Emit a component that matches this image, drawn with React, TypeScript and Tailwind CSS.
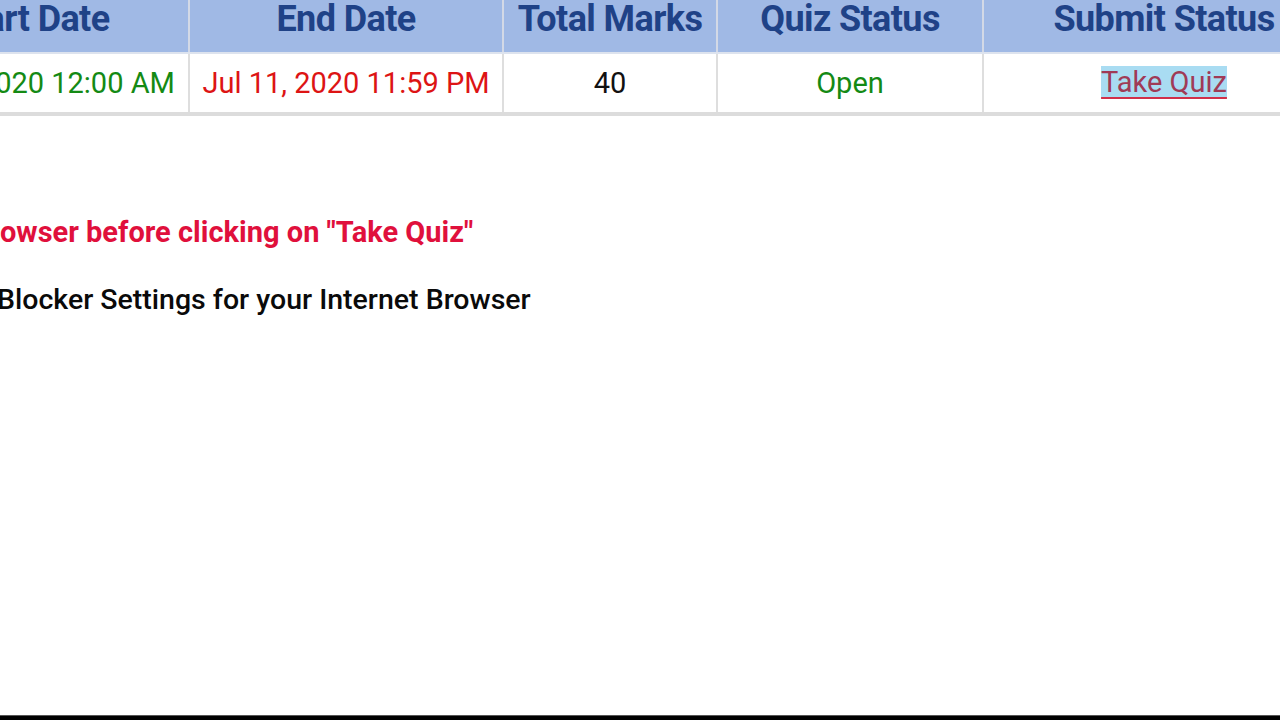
import React from "react";

// Quiz listing page, viewed zoomed-in (left and right edges cropped).

const COLS = [
    { key: "start", label: "Start Date", w: "w-[314px]" },
    { key: "end", label: "End Date", w: "w-[314px]" },
    { key: "marks", label: "Total Marks", w: "w-[214px]" },
    { key: "status", label: "Quiz Status", w: "w-[266px]" },
    { key: "submit", label: "Submit Status", w: "w-[362px]" },
];

export default function App() {
    return (
        <div
            className="relative h-[720px] w-[1280px] overflow-hidden bg-white"
            style={{ fontFamily: "Roboto, 'Noto Sans', sans-serif" }}
        >
            {/* ── Quiz table ── */}
            <div className="ml-[-126px] w-max border-b-4 border-[#dcdcdc]">
                <div className="flex h-[52px] bg-[#a0b9e5]">
                    {COLS.map((c, i) => (
                        <div
                            key={c.key}
                            className={`${c.w} flex shrink-0 items-start justify-center whitespace-nowrap pt-[1px] text-[36px] font-bold leading-[36px] tracking-[-0.6px] text-[#1f4287] ${i > 0 ? "border-l-2 border-[#d3d9e6]" : ""}`}
                        >
                            {c.label}
                        </div>
                    ))}
                </div>
                <div className="flex h-[60px] border-t-2 border-[#dde3ee] text-[29px] leading-[58px]">
                    <div className="w-[314px] shrink-0 text-center text-[#148a14]">Jul 11, 2020 12:00 AM</div>
                    <div className="w-[314px] shrink-0 border-l-2 border-[#dedede] text-center text-[#dd1414]">Jul 11, 2020 11:59 PM</div>
                    <div className="w-[214px] shrink-0 border-l-2 border-[#dedede] text-center text-[#111]">40</div>
                    <div className="w-[266px] shrink-0 border-l-2 border-[#dedede] text-center text-[#148a14]">Open</div>
                    <div className="flex w-[362px] shrink-0 items-center justify-center border-l-2 border-[#dedede] pb-[2px]">
                        <a className="bg-[#a9dcf2] leading-[32px] text-[#a03a56] underline decoration-[#d0304a] decoration-2 underline-offset-[5px]">
                            Take Quiz
                        </a>
                    </div>
                </div>
            </div>

            {/* ── Instructions ── */}
            <div className="mt-[100px] flex whitespace-nowrap text-[29px] font-bold leading-[32px] text-[#e0103c]">
                <span className="flex w-0 justify-end">Please close all other tabs of your br</span>
                <span>owser before clicking on "Take Quiz"</span>
            </div>
            <div className="mt-[36px] flex whitespace-nowrap text-[28.5px] font-medium leading-[32px] text-[#0a0a0a]">
                <span className="flex w-0 justify-end">Disable Pop-up&nbsp;</span>
                <span className="ml-[-3px]">Blocker Settings for your Internet Browser</span>
            </div>

            {/* bottom edge of the device frame */}
            <div className="absolute bottom-0 left-0 h-[5px] w-full border-t border-[#555] bg-black" />
        </div>
    );
}
